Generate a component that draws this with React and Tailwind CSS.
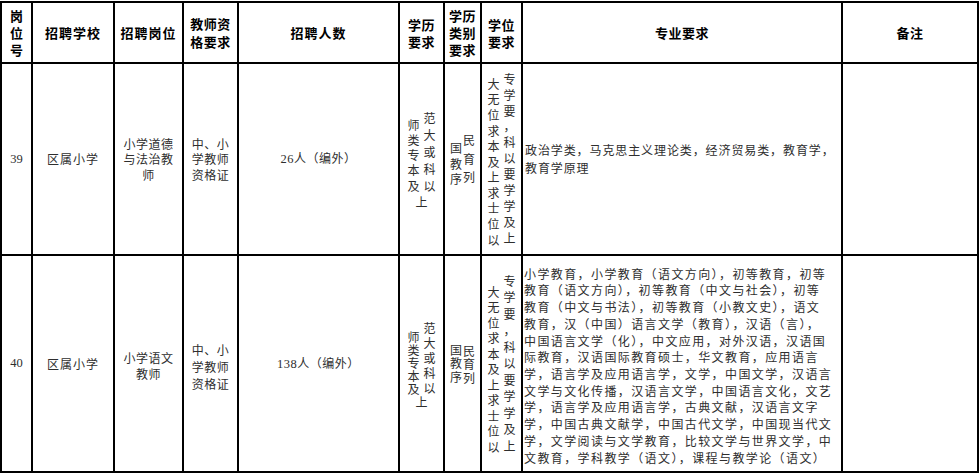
import React from "react";

function Cell({ children, className = "" }) {
  return (
    <div className={`bg-white flex items-center justify-center text-[#2e2e2e] text-[12px] ${className}`}>
      {children}
    </div>
  );
}

function Num({ children }) {
  return <span className="font-['Liberation_Serif',serif] text-[12.5px]">{children}</span>;
}

function H({ lines, className = "" }) {
  return (
    <div
      className={`bg-white flex items-center justify-center text-black font-bold text-[13px] leading-[17px] text-center ${className}`}
    >
      <div className="flex flex-col items-center">
        {lines.map((t, i) => (
          <div key={i} className="whitespace-nowrap">
            {t}
          </div>
        ))}
      </div>
    </div>
  );
}

function Col({ chars, className }) {
  return (
    <div className={`flex flex-col items-center ${className}`}>
      {chars.split("").map((c, i) => (
        <span key={i}>{c}</span>
      ))}
    </div>
  );
}

function Pair({ l, r, tail, lc, rc, gap, tc }) {
  return (
    <div className="flex flex-col items-center text-[12px]">
      <div className={`flex items-start ${gap}`}>
        <Col chars={l} className={lc} />
        <Col chars={r} className={rc} />
      </div>
      {tail ? <div className={tc}>{tail}</div> : null}
    </div>
  );
}

function Lines({ lines, className }) {
  return (
    <div className={`flex flex-col ${className}`}>
      {lines.map((t, i) => (
        <div key={i} className="whitespace-nowrap">
          {t}
        </div>
      ))}
    </div>
  );
}

const major2 = [
  "小学教育，小学教育（语文方向），初等教育，初等",
  "教育（语文方向），初等教育（中文与社会），初等",
  "教育（中文与书法），初等教育（小教文史），语文",
  "教育，汉（中国）语言文学（教育），汉语（言），",
  "中国语言文学（化），中文应用，对外汉语，汉语国",
  "际教育，汉语国际教育硕士，华文教育，应用语言",
  "学，语言学及应用语言学，文学，中国文学，汉语言",
  "文学与文化传播，汉语言文学，中国语言文化，文艺",
  "学，语言学及应用语言学，古典文献，汉语言文字",
  "学，中国古典文献学，中国古代文学，中国现当代文",
  "学，文学阅读与文学教育，比较文学与世界文学，中",
  "文教育，学科教学（语文），课程与教学论（语文）",
];

export default function App() {
  return (
    <div className="w-[980px] h-[473px] bg-white overflow-hidden font-['Noto_Sans_CJK_SC','Liberation_Sans',sans-serif]">
      <div className="mt-[1px] w-[979px] bg-black p-[2px] grid gap-[2px] grid-cols-[29px_80px_67px_53px_159px_43px_35px_39px_318px_134px] grid-rows-[59px_190px_215px]">
        {/* header */}
        <H lines={["岗", "位", "号"]} />
        <H className="tracking-[1px]" lines={["招聘学校"]} />
        <H className="tracking-[1px]" lines={["招聘岗位"]} />
        <H className="tracking-[0.5px] leading-[18px]" lines={["教师资", "格要求"]} />
        <H className="tracking-[1px]" lines={["招聘人数"]} />
        <H className="text-[12.5px] tracking-[0.5px]" lines={["学历", "要求"]} />
        <H className="text-[12.5px] tracking-[0.5px] leading-[16px]" lines={["学历", "类别", "要求"]} />
        <H className="text-[12.5px] tracking-[0.5px]" lines={["学位", "要求"]} />
        <H className="tracking-[0.5px]" lines={["专业要求"]} />
        <H className="tracking-[0.5px]" lines={["备注"]} />

        {/* row 39 */}
        <Cell>
          <Num>39</Num>
        </Cell>
        <Cell className="tracking-[1px]">区属小学</Cell>
        <Cell>
          <Lines
            className="items-center leading-[15.5px] tracking-[0.5px]"
            lines={["小学道德", "与法治教", "师"]}
          />
        </Cell>
        <Cell>
          <Lines
            className="items-center leading-[15.5px] tracking-[0.5px]"
            lines={["中、小", "学教师", "资格证"]}
          />
        </Cell>
        <Cell className="tracking-[0.5px]">
          <span>
            <Num>26</Num>人（编外）
          </span>
        </Cell>
        <Cell>
          <Pair
            l="师类专本及"
            r="范大或科以"
            tail="上"
            gap="gap-[4px]"
            lc="pt-[8px] leading-[15.25px]"
            rc="leading-[17px]"
            tc="leading-[16px]"
          />
        </Cell>
        <Cell>
          <Pair
            l="国教序"
            r="民育列"
            gap="gap-[1px]"
            lc="pt-[9px] leading-[15.5px]"
            rc="leading-[18.5px]"
          />
        </Cell>
        <Cell>
          <Pair
            l="大无位求本及上求士位以"
            r="专学要，科以要学学及上"
            gap="gap-[4px]"
            lc="pt-[5px] leading-[15.6px]"
            rc="leading-[15.9px]"
          />
        </Cell>
        <Cell className="justify-start">
          <Lines
            className="pl-[2px] leading-[18px] tracking-[0.9px]"
            lines={["政治学类，马克思主义理论类，经济贸易类，教育学，", "教育学原理"]}
          />
        </Cell>
        <Cell />

        {/* row 40 */}
        <Cell>
          <Num>40</Num>
        </Cell>
        <Cell className="tracking-[1px]">区属小学</Cell>
        <Cell>
          <Lines
            className="items-center pt-[5px] leading-[16px] tracking-[0.5px]"
            lines={["小学语文", "教师"]}
          />
        </Cell>
        <Cell>
          <Lines
            className="items-center pt-[5px] leading-[17px] tracking-[0.5px]"
            lines={["中、小", "学教师", "资格证"]}
          />
        </Cell>
        <Cell className="tracking-[0.5px]">
          <span>
            <Num>138</Num>人（编外）
          </span>
        </Cell>
        <Cell>
          <Pair
            l="师类专本及"
            r="范大或科以"
            tail="上"
            gap="gap-[4px]"
            lc="pt-[10px] leading-[13px]"
            rc="leading-[15px]"
            tc="leading-[13px]"
          />
        </Cell>
        <Cell>
          <Pair
            l="国教序"
            r="民育列"
            gap="gap-[1px]"
            lc="leading-[13.5px]"
            rc="pt-[1px] leading-[13.5px]"
          />
        </Cell>
        <Cell>
          <Pair
            l="大无位求本及上求士位以"
            r="专学要，科以要学学及上"
            gap="gap-[4px]"
            lc="pt-[11px] leading-[15.5px]"
            rc="leading-[16.5px]"
          />
        </Cell>
        <Cell className="justify-start">
          <Lines className="pl-[1px] pt-[5px] leading-[16.7px] tracking-[1.4px]" lines={major2} />
        </Cell>
        <Cell />
      </div>
    </div>
  );
}
